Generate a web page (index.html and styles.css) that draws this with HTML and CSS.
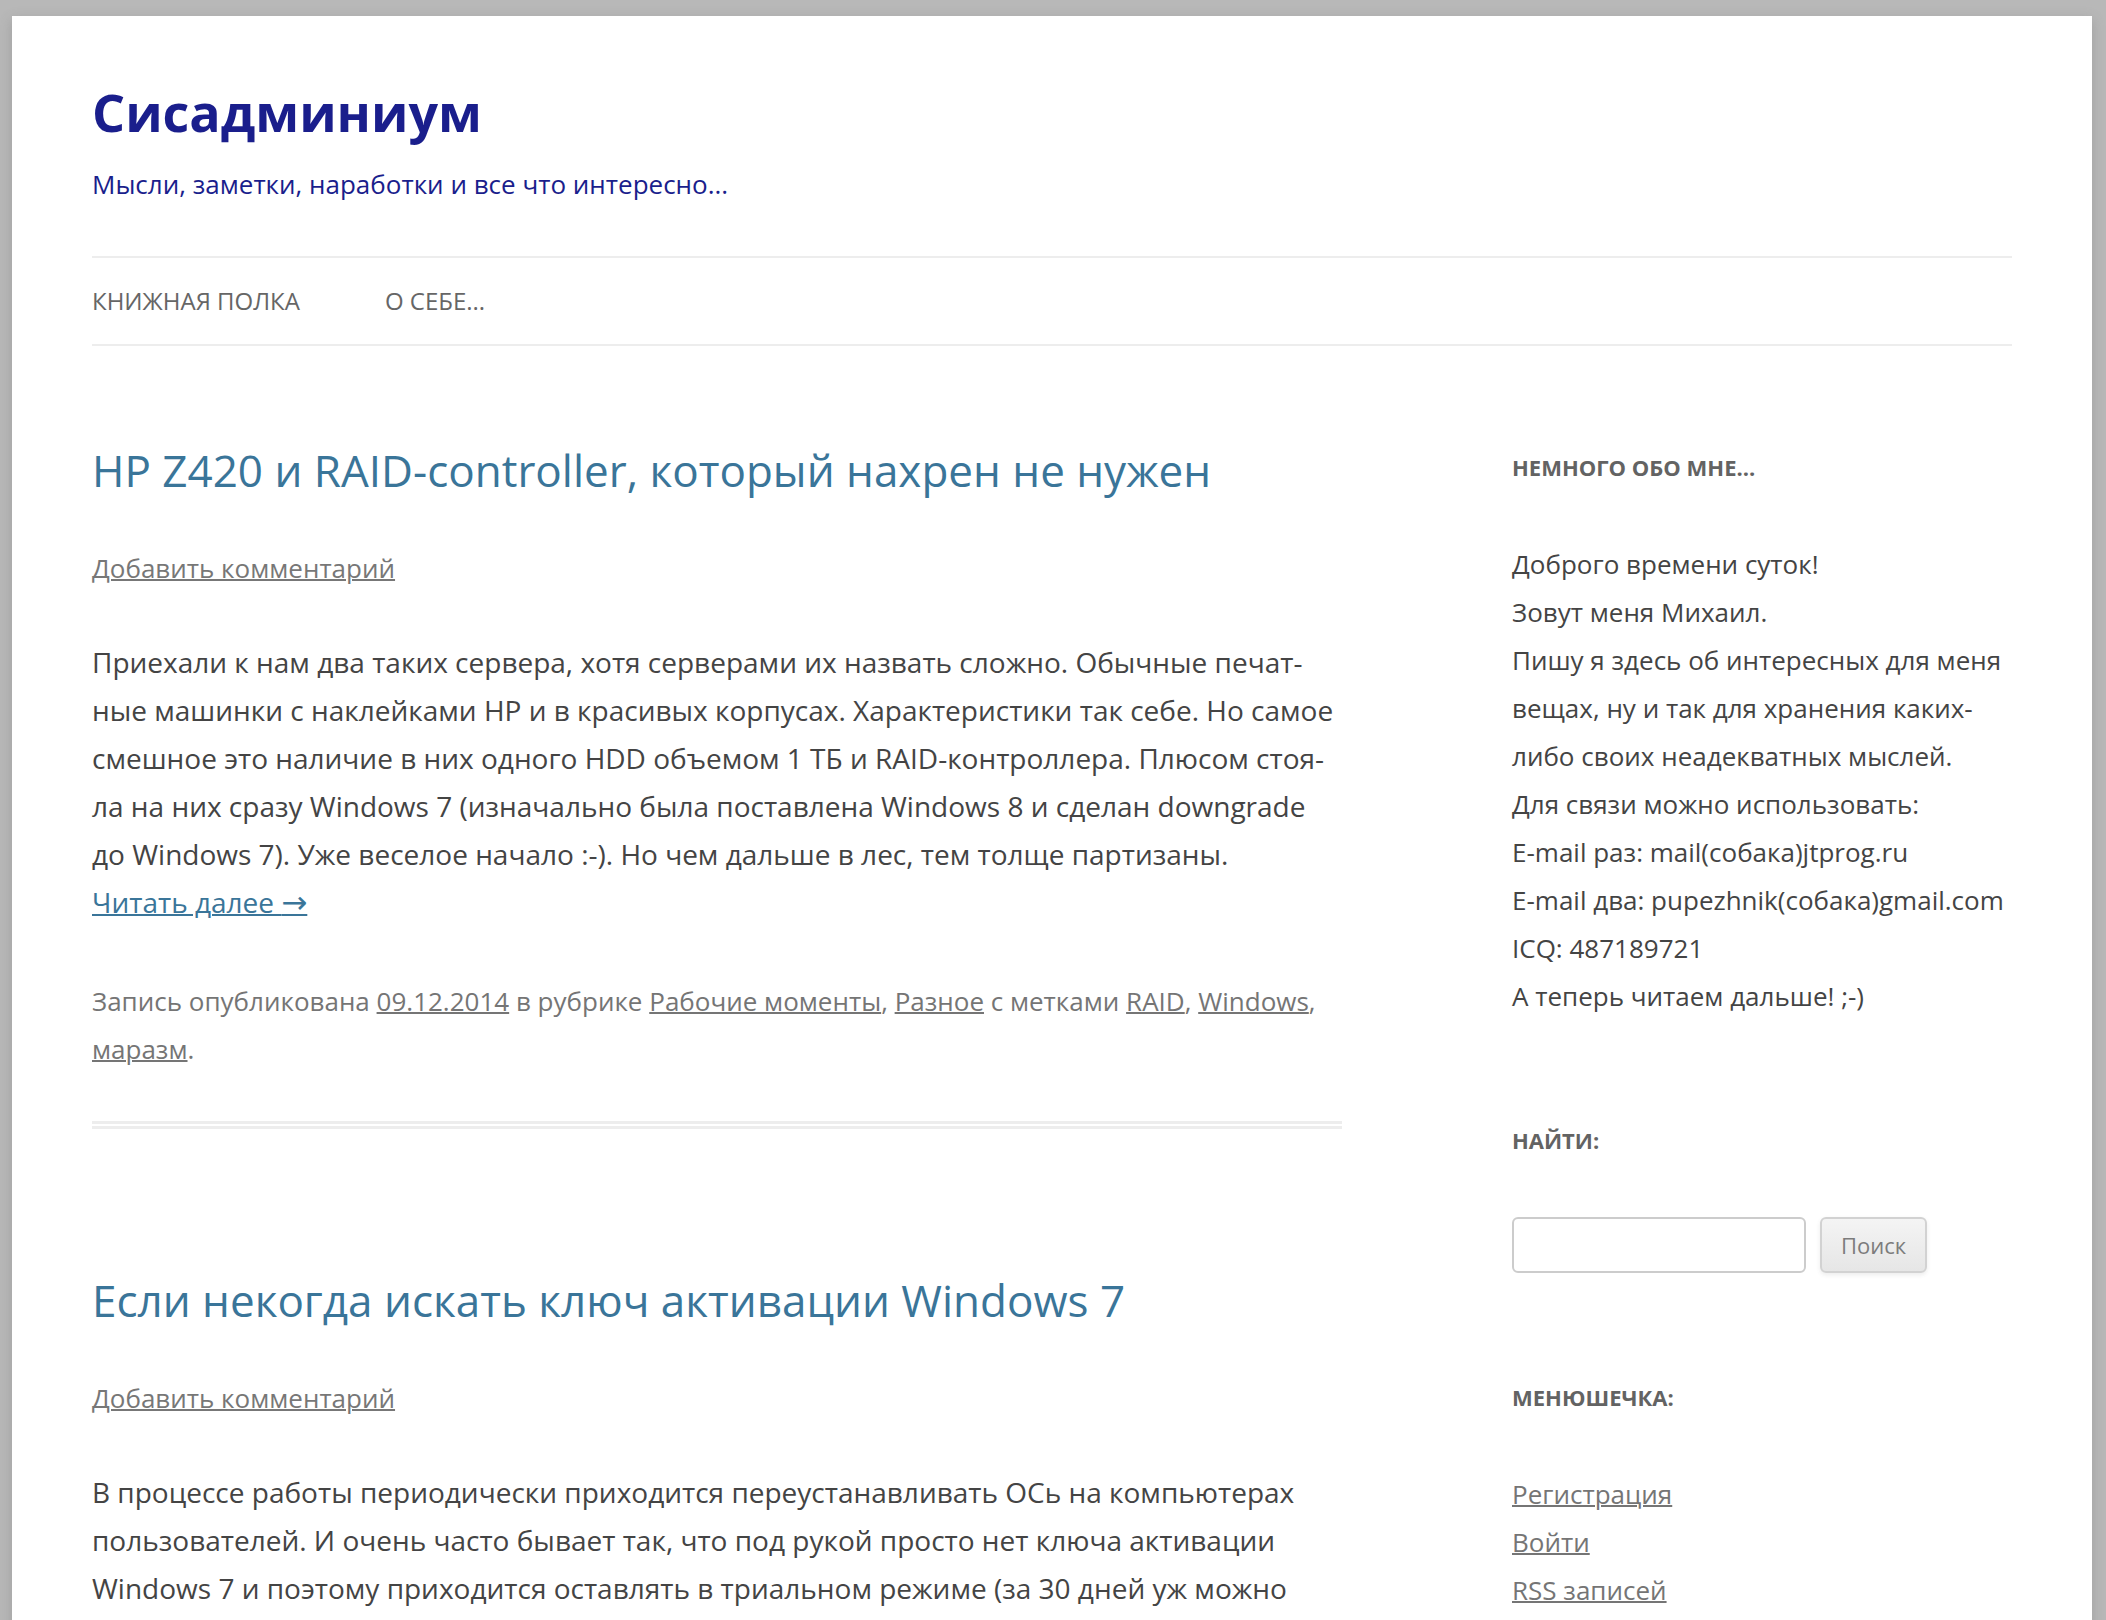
FILE: index.html
```html
<!DOCTYPE html>
<html lang="ru">
<head>
<meta charset="utf-8">
<title>Сисадминиум</title>
<link rel="stylesheet" href="styles.css">
</head>
<body>
<div class="site">
  <header class="site-header">
    <h1 class="site-title">Сисадминиум</h1>
    <h2 class="site-description">Мысли, заметки, наработки и все что интересно...</h2>
    <nav class="main-nav">
      <a href="#">Книжная полка</a>
      <a href="#">О себе...</a>
    </nav>
  </header>
  <div class="main">
    <div class="content">
      <article class="post">
        <h2 class="entry-title">HP Z420 и RAID-controller, который нахрен не нужен</h2>
        <div class="comments-link"><a href="#">Добавить комментарий</a></div>
        <div class="entry-content">
          <p>Приехали к нам два таких сервера, хотя серверами их назвать сложно. Обычные печат-<br>ные машинки с наклейками HP и в красивых корпусах. Характеристики так себе. Но самое<br>смешное это наличие в них одного HDD объемом 1 ТБ и RAID-контроллера. Плюсом стоя-<br>ла на них сразу Windows 7 (изначально была поставлена Windows 8 и сделан downgrade<br>до Windows 7). Уже веселое начало :-). Но чем дальше в лес, тем толще партизаны.<br><a class="more-link" href="#">Читать далее <span class="arrow">→</span></a></p>
        </div>
        <footer class="entry-meta">Запись опубликована <a href="#">09.12.2014</a> в рубрике <a href="#">Рабочие моменты</a>, <a href="#">Разное</a> с метками <a href="#">RAID</a>, <a href="#">Windows</a>,<br><a href="#">маразм</a>.</footer>
      </article>
      <article class="post">
        <h2 class="entry-title">Если некогда искать ключ активации Windows 7</h2>
        <div class="comments-link"><a href="#">Добавить комментарий</a></div>
        <div class="entry-content">
          <p>В процессе работы периодически приходится переустанавливать ОСь на компьютерах<br>пользователей. И очень часто бывает так, что под рукой просто нет ключа активации<br>Windows 7 и поэтому приходится оставлять в триальном режиме (за 30 дней уж можно<br>что-нибудь придумать).</p>
        </div>
      </article>
    </div>
    <aside class="sidebar">
      <section class="widget">
        <h3 class="widget-title">Немного обо мне...</h3>
        <p class="widget-text">Доброго времени суток!<br>Зовут меня Михаил.<br>Пишу я здесь об интересных для меня<br>вещах, ну и так для хранения каких-<br>либо своих неадекватных мыслей.<br>Для связи можно использовать:<br>E-mail раз: mail(собака)jtprog.ru<br>E-mail два: pupezhnik(собака)gmail.com<br>ICQ: 487189721<br>А теперь читаем дальше! ;-)</p>
      </section>
      <section class="widget">
        <h3 class="widget-title">Найти:</h3>
        <form class="search-form">
          <input class="search-input" type="text">
          <button class="search-button" type="button">Поиск</button>
        </form>
      </section>
      <section class="widget">
        <h3 class="widget-title widget-title-list">Менюшечка:</h3>
        <ul class="widget-list">
          <li><a href="#">Регистрация</a></li>
          <li><a href="#">Войти</a></li>
          <li><a href="#">RSS записей</a></li>
        </ul>
      </section>
    </aside>
  </div>
</div>
</body>
</html>
```

FILE: styles.css
```css
html, body {
  margin: 0;
  padding: 0;
}
body {
  background: #b8b8b8;
  font-family: "Open Sans", "Noto Sans", sans-serif;
  color: #444;
}
.site {
  width: 1920px;
  margin: 16px 0 0 12px;
  padding: 0 80px;
  background: #fff;
  box-shadow: 0 4px 12px rgba(100, 100, 100, 0.3);
  min-height: 1700px;
}
.site-header {
  padding-top: 48px;
}
.site-title {
  margin: 0;
  font-size: 52px;
  line-height: 96px;
  font-weight: 700;
  color: #1a1e8c;
}
.site-description {
  margin: 0;
  font-size: 26px;
  line-height: 48px;
  font-weight: 400;
  color: #1a1e8c;
}
.main-nav {
  margin-top: 48px;
  border-top: 2px solid #ededed;
  border-bottom: 2px solid #ededed;
  display: flex;
}
.main-nav a {
  font-size: 24px;
  line-height: 86px;
  text-transform: uppercase;
  color: #666;
  text-decoration: none;
  margin-right: 85px;
}
.main {
  display: flex;
  justify-content: space-between;
  align-items: flex-start;
  margin-top: 96px;
}
.content {
  width: 1250px;
}
.post {
  padding-bottom: 48px;
  border-bottom: 8px double #ededed;
  margin-bottom: 143px;
}
.entry-title {
  margin: 0;
  font-size: 44px;
  line-height: 56px;
  font-weight: 400;
  color: #3a7599;
}
.comments-link {
  margin-top: 46px;
  font-size: 26px;
  line-height: 48px;
}
.comments-link a {
  color: #777;
  text-decoration-thickness: 2px;
}
.entry-content {
  margin-top: 46px;
}
.entry-content p {
  margin: 0 0 48px;
  font-size: 28px;
  line-height: 48px;
  color: #444;
}
.more-link {
  color: #3a7599;
  text-decoration-thickness: 2px;
}
.arrow {
  font-family: "DejaVu Sans", sans-serif;
  font-size: 31px;
  line-height: 0;
}
.entry-meta {
  padding-top: 3px;
  font-size: 26px;
  line-height: 48px;
  color: #757575;
}
.entry-meta a {
  color: #757575;
  text-decoration-thickness: 2px;
}
.sidebar {
  width: 500px;
  padding-top: 1px;
}
.widget {
  margin-bottom: 96px;
}
.widget-title {
  margin: 0 0 49px;
  font-size: 22px;
  line-height: 48px;
  font-weight: 700;
  text-transform: uppercase;
  color: #636363;
}
.widget-title-list {
  margin-bottom: 49px;
}
.widget-text {
  margin: 0;
  font-size: 26px;
  line-height: 48px;
  color: #444;
}
.search-form {
  display: flex;
  gap: 14px;
  padding-top: 4px;
  padding-bottom: 4px;
}
.search-input {
  box-sizing: border-box;
  width: 294px;
  height: 56px;
  border: 2px solid #ccc;
  border-radius: 6px;
  background: #fff;
  margin: 0;
}
.search-button {
  box-sizing: border-box;
  width: 107px;
  height: 56px;
  border: 2px solid #d2d2d2;
  border-radius: 6px;
  background: linear-gradient(#f4f4f4, #e6e6e6);
  box-shadow: 0 2px 4px rgba(64, 64, 64, 0.1);
  font-family: "Open Sans", "Noto Sans", sans-serif;
  font-size: 22px;
  color: #7c7c7c;
  padding: 0;
  margin: 0;
}
.widget-list {
  list-style: none;
  margin: 0;
  padding: 0;
}
.widget-list li {
  font-size: 26px;
  line-height: 48px;
}
.widget-list a {
  color: #757575;
  text-decoration-thickness: 2px;
}
```
